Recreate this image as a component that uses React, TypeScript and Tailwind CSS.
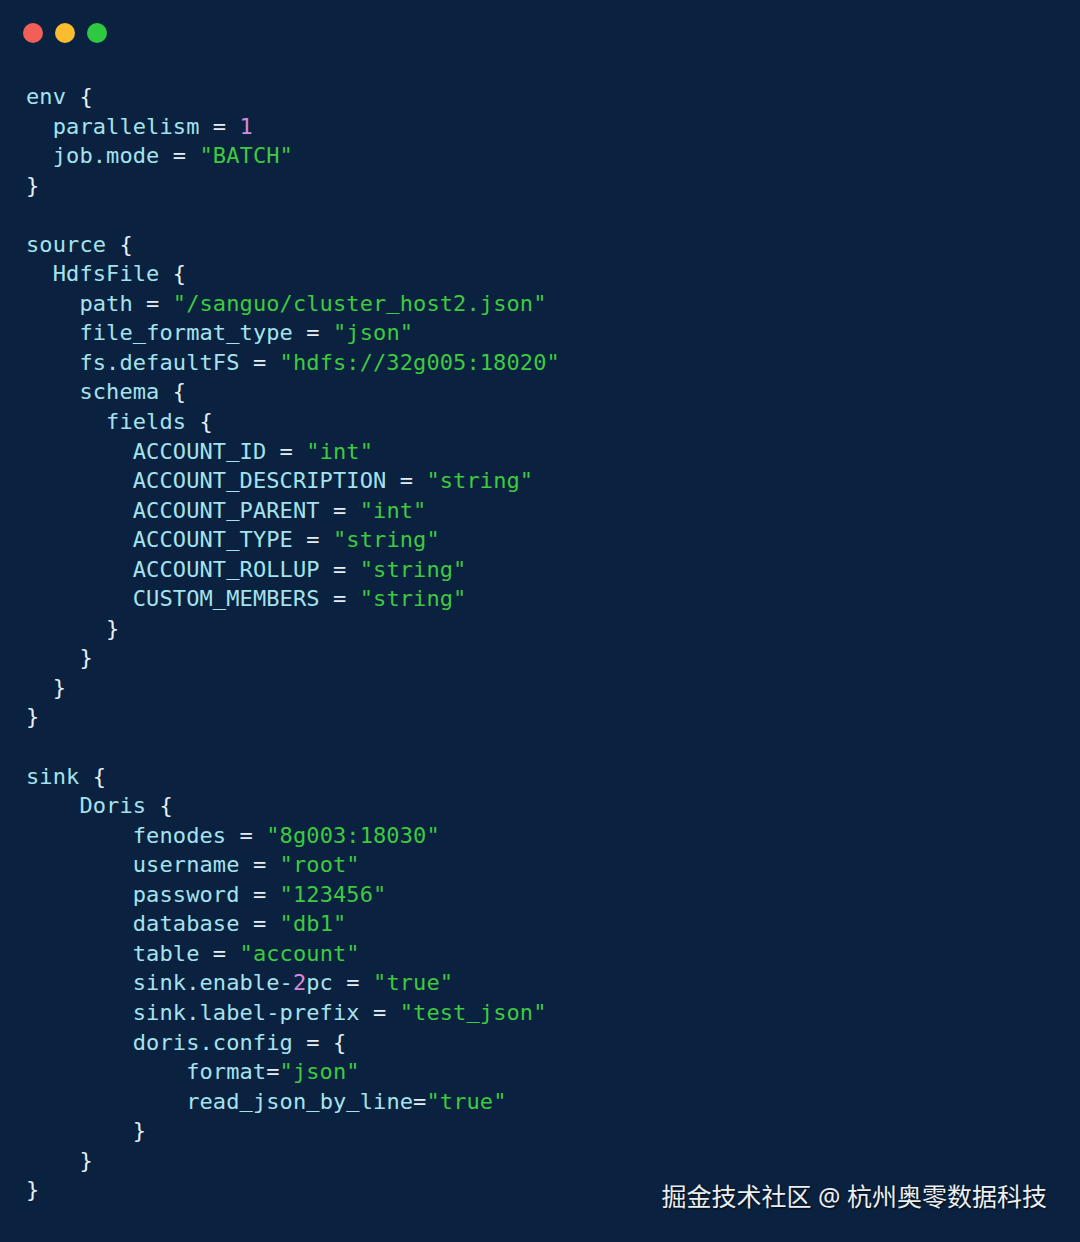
import React from "react";

const CODE = `env {
  parallelism = 1
  job.mode = "BATCH"
}

source {
  HdfsFile {
    path = "/sanguo/cluster_host2.json"
    file_format_type = "json"
    fs.defaultFS = "hdfs://32g005:18020"
    schema {
      fields {
        ACCOUNT_ID = "int"
        ACCOUNT_DESCRIPTION = "string"
        ACCOUNT_PARENT = "int"
        ACCOUNT_TYPE = "string"
        ACCOUNT_ROLLUP = "string"
        CUSTOM_MEMBERS = "string"
      }
    }
  }
}

sink {
    Doris {
        fenodes = "8g003:18030"
        username = "root"
        password = "123456"
        database = "db1"
        table = "account"
        sink.enable-2pc = "true"
        sink.label-prefix = "test_json"
        doris.config = {
            format="json"
            read_json_by_line="true"
        }
    }
}`;

function withUnderscores(text: string, k: string) {
  const parts = text.split("_");
  const out: React.ReactNode[] = [];
  parts.forEach((p, idx) => {
    if (idx > 0)
      out.push(
        <span key={k + "u" + idx} className="relative top-[-1.5px]">
          _
        </span>
      );
    if (p) out.push(<React.Fragment key={k + "p" + idx}>{p}</React.Fragment>);
  });
  return out;
}

function renderLine(line: string, li: number) {
  const re = /("[^"]*")|(\d+)|([{}=])|([^"\d{}=]+)/g;
  const out: React.ReactNode[] = [];
  let m: RegExpExecArray | null;
  let i = 0;
  while ((m = re.exec(line)) !== null) {
    const k = String(i++);
    if (m[1]) out.push(<span key={k} className="text-[#3fc93f]">{withUnderscores(m[1], k)}</span>);
    else if (m[2]) out.push(<span key={k} className="text-[#d98ad8]">{m[2]}</span>);
    else if (m[3]) out.push(<span key={k} className="text-[#e6eef2]">{m[3]}</span>);
    else out.push(<span key={k} className="text-[#a6e2ee]">{withUnderscores(m[4], k)}</span>);
  }
  return (
    <div key={li} className="whitespace-pre">
      {out.length ? out : " "}
    </div>
  );
}

export default function App() {
  return (
    <div className="relative w-[1080px] h-[1242px] bg-[#0a2240] overflow-hidden">
      <div className="flex gap-[12px] pl-[23px] pt-[23px]">
        <div className="w-[20px] h-[20px] rounded-full bg-[#f25f58]" />
        <div className="w-[20px] h-[20px] rounded-full bg-[#fbbc2f]" />
        <div className="w-[20px] h-[20px] rounded-full bg-[#2fc843]" />
      </div>
      <div
        className="pl-[26px] pt-[39px] text-[22px] tracking-[0.1px] leading-[29.54px]"
        style={{ fontFamily: '"DejaVu Sans Mono", monospace' }}
      >
        {CODE.split("\n").map((l, i) => renderLine(l, i))}
      </div>
      <div
        className="absolute right-[33px] top-[1178px] text-[25px] leading-[36px] text-[#eceff1] [text-shadow:1px_1px_2px_rgba(0,0,0,0.8)]"
        style={{ fontFamily: '"Noto Sans", "Noto Sans CJK SC", sans-serif' }}
      >
        掘金技术社区 @ 杭州奥零数据科技
      </div>
    </div>
  );
}
